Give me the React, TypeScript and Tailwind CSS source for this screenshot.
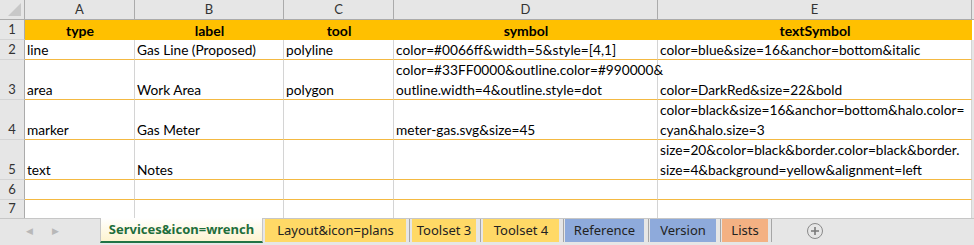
import React from "react";

const cols = ["w-[110px]", "w-[149px]", "w-[110px]", "w-[264px]", "w-[314px]"];

type Row = { h: string; n: number; cells: string[][] };

const rows: Row[] = [
  { h: "h-[20px]", n: 2, cells: [["line"], ["Gas Line (Proposed)"], ["polyline"], ["color=#0066ff&width=5&style=[4,1]"], ["color=blue&size=16&anchor=bottom&italic"]] },
  { h: "h-[40px]", n: 3, cells: [["area"], ["Work Area"], ["polygon"], ["color=#33FF0000&outline.color=#990000&", "outline.width=4&outline.style=dot"], ["color=DarkRed&size=22&bold"]] },
  { h: "h-[40px]", n: 4, cells: [["marker"], ["Gas Meter"], [], ["meter-gas.svg&size=45"], ["color=black&size=16&anchor=bottom&halo.color=", "cyan&halo.size=3"]] },
  { h: "h-[40px]", n: 5, cells: [["text"], ["Notes"], [], [], ["size=20&color=black&border.color=black&border.", "size=4&background=yellow&alignment=left"]] },
  { h: "h-[20px]", n: 6, cells: [[], [], [], [], []] },
  { h: "h-[19px]", n: 7, cells: [[], [], [], [], []] },
];

export default function App() {
  return (
    <div className="w-[974px] h-[245px] overflow-hidden bg-white flex flex-col" style={{ fontFamily: "Lato, 'Noto Sans', sans-serif" }}>
      <div className="flex flex-col h-[218px] overflow-hidden">
        <div className="flex h-[20px] shrink-0 bg-[#e6e6e6] text-[13px] text-[#333]">
          <div className="w-[25px] border-r border-b border-[#ababab] relative">
            <div className="absolute right-[3px] bottom-[3px] w-0 h-0 border-l-[13px] border-l-transparent border-b-[13px] border-b-[#c8c8c8]" />
          </div>
          {["A", "B", "C", "D", "E"].map((l, i) => (
            <div key={l} className={`${cols[i]} border-r border-b border-[#ababab] flex items-center justify-center`}>{l}</div>
          ))}
          <div className="flex-1 border-b border-[#ababab]" />
        </div>
        <div className="flex h-[20px] shrink-0">
          <div className="w-[25px] bg-[#e6e6e6] border-r border-[#ababab] border-b border-b-[#d4d4d4] flex items-end justify-center text-[13px] text-[#333] leading-[19px]">1</div>
          {["type", "label", "tool", "symbol", "textSymbol"].map((t, i) => (
            <div key={t} className={`${cols[i]} bg-[#ffc000] flex items-end justify-center font-bold text-[14px] leading-[19px] text-black`}>{t}</div>
          ))}
          <div className="flex-1 bg-white" />
        </div>
        {rows.map((r) => (
          <div key={r.n} className={`flex ${r.h} shrink-0`}>
            <div className="w-[25px] bg-[#e6e6e6] border-r border-[#ababab] border-b border-b-[#d4d4d4] flex items-end justify-center text-[13px] text-[#333] leading-[19px]">{r.n}</div>
            {r.cells.map((c, i) => (
              <div key={i} className={`${cols[i]} border-r border-[#d4d4d4] border-b border-b-[#f4b942] flex flex-col justify-end pl-[2px] text-[13.7px] leading-[19.5px] text-black whitespace-nowrap overflow-visible`}>
                {c.map((l, j) => (
                  <div key={j}>{l}</div>
                ))}
              </div>
            ))}
            <div className="flex-1 bg-[#e6e6e6]" />
          </div>
        ))}
      </div>
      <div className="flex-1 bg-[#e6e6e6] border-t border-[#c6c6c6] flex items-start text-[13px] relative" style={{ fontFamily: "'Noto Sans', sans-serif" }}>
        <div className="w-[100px] flex items-center h-[24px] text-[#b8b8b8] text-[9px]">
          <span className="ml-[26px]">◀</span>
          <span className="ml-[19px]">▶</span>
        </div>
        <div className="w-[163px] h-[25px] -mt-[1px] bg-gradient-to-b from-white to-[#fdf3cf] border-b-2 border-[#217346] border-x border-x-[#c6c6c6] flex items-center justify-center font-bold text-[#1e6e3c]">Services&amp;icon=wrench</div>
        <div className="flex items-start h-[24px]">
          <div className="w-[141px] h-[23px] bg-[#ffd966] flex items-center justify-center text-[#222] ml-[2px]">Layout&amp;icon=plans</div>
          <div className="w-[1px] h-[23px] bg-[#a6a6a6] ml-[3px]" />
          <div className="w-[64px] h-[23px] bg-[#ffd966] flex items-center justify-center text-[#222] ml-[2px]">Toolset 3</div>
          <div className="w-[1px] h-[23px] bg-[#a6a6a6] ml-[4px]" />
          <div className="w-[76px] h-[23px] bg-[#ffd966] flex items-center justify-center text-[#222] ml-[2px]">Toolset 4</div>
          <div className="w-[1px] h-[23px] bg-[#a6a6a6] ml-[4px]" />
          <div className="w-[79px] h-[23px] bg-[#8eaadb] flex items-center justify-center text-[#222] ml-[1px]">Reference</div>
          <div className="w-[1px] h-[23px] bg-[#a6a6a6] ml-[4px]" />
          <div className="w-[66px] h-[23px] bg-[#8eaadb] flex items-center justify-center text-[#222] ml-[1px]">Version</div>
          <div className="w-[1px] h-[23px] bg-[#a6a6a6] ml-[4px]" />
          <div className="w-[46px] h-[23px] bg-[#f4b183] flex items-center justify-center text-[#222] ml-[1px]">Lists</div>
          <div className="w-[1px] h-[23px] bg-[#a6a6a6] ml-[3px]" />
          <div className="ml-[35px] mt-[4px] w-[16px] h-[16px] rounded-full border border-[#8a8a8a] flex items-center justify-center">
            <svg width="10" height="10" viewBox="0 0 10 10"><path d="M5 1v8M1 5h8" stroke="#7a7a7a" strokeWidth="1.6" /></svg>
          </div>
        </div>
      </div>
    </div>
  );
}
